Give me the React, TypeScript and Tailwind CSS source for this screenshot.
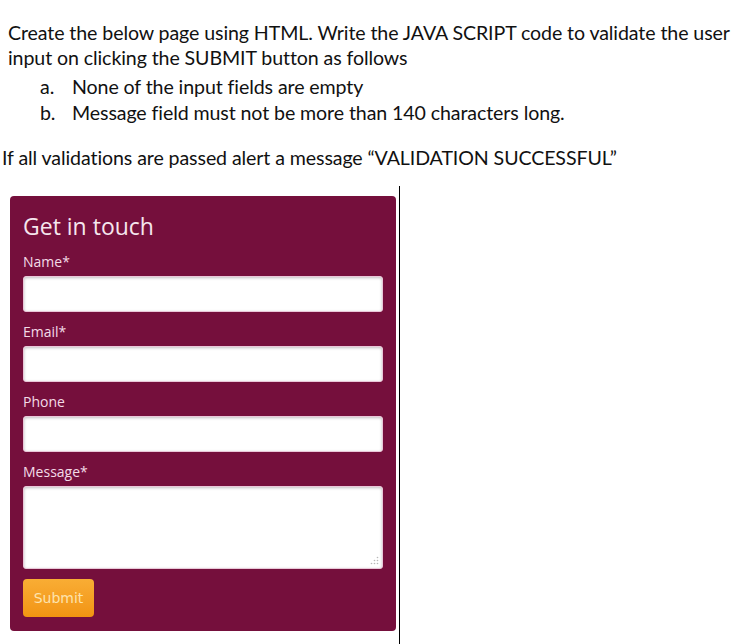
import React from "react";

const body = { fontFamily: "Lato, 'Liberation Sans', sans-serif" };
const form = { fontFamily: "'Open Sans', 'Noto Sans', sans-serif" };

function Field({ label, tall }: { label: string; tall?: boolean }) {
  return (
    <div className="flex flex-col">
      <div className="text-[14px] leading-[20px] text-[#f3dbe7] h-[20px]">{label}</div>
      {tall ? (
        <div className="relative mt-[4px] h-[83px] w-full rounded-[3px] bg-white shadow-[inset_0_1px_3px_rgba(0,0,0,0.25)] border border-[#e9c7d8]">
          <svg className="absolute right-[3px] bottom-[3px]" width="9" height="9" viewBox="0 0 9 9">
            <circle cx="7.5" cy="1.5" r="0.8" fill="#b8b8b8" />
            <circle cx="7.5" cy="4.5" r="0.8" fill="#b8b8b8" />
            <circle cx="4.5" cy="4.5" r="0.8" fill="#b8b8b8" />
            <circle cx="7.5" cy="7.5" r="0.8" fill="#b8b8b8" />
            <circle cx="4.5" cy="7.5" r="0.8" fill="#b8b8b8" />
            <circle cx="1.5" cy="7.5" r="0.8" fill="#b8b8b8" />
          </svg>
        </div>
      ) : (
        <div className="mt-[4px] h-[36px] w-full rounded-[3px] bg-white shadow-[inset_0_1px_3px_rgba(0,0,0,0.25)] border border-[#e9c7d8]" />
      )}
    </div>
  );
}

export default function App() {
  return (
    <div className="w-[753px] h-[644px] bg-white overflow-hidden text-[#111]" style={body}>
      <div className="pt-[20px] pl-[8px] text-[19.6px] leading-[25px] tracking-[-0.1px]">
        <p>Create the below page using HTML. Write the JAVA SCRIPT code to validate the user</p>
        <p>input on clicking the SUBMIT button as follows</p>
      </div>
      <div className="mt-[4px] text-[19.6px] leading-[26px] tracking-[-0.1px]">
        <div className="flex">
          <span className="w-[72px] pl-[40px]">a.</span>
          <span>None of the input fields are empty</span>
        </div>
        <div className="flex">
          <span className="w-[72px] pl-[40px]">b.</span>
          <span>Message field must not be more than 140 characters long.</span>
        </div>
      </div>
      <p className="mt-[19px] pl-[2px] text-[19.6px] leading-[26px] tracking-[-0.1px]">
        If all validations are passed alert a message “VALIDATION SUCCESSFUL”
      </p>
      <div className="mt-[15px] w-[400px] h-[460px] border-r border-black pt-[10px] pl-[10px]">
        <div className="w-[386px] h-[435px] rounded-[4px] bg-[#750f3c] px-[13px] pt-[15px]" style={form}>
          <div className="text-[23px] leading-[30px] text-[#f6e6ee] h-[30px]">Get in touch</div>
          <div className="flex flex-col gap-[10px] mt-[11px]">
            <Field label="Name*" />
            <Field label="Email*" />
            <Field label="Phone" />
            <Field label="Message*" tall />
          </div>
          <button
            className="mt-[10px] w-[71px] h-[38px] rounded-[4px] bg-gradient-to-b from-[#f9ad34] to-[#f29410] text-[#fde3ad] text-[14px]"
            style={{ fontFamily: "'DejaVu Sans', Verdana, sans-serif" }}
          >
            Submit
          </button>
        </div>
      </div>
    </div>
  );
}
